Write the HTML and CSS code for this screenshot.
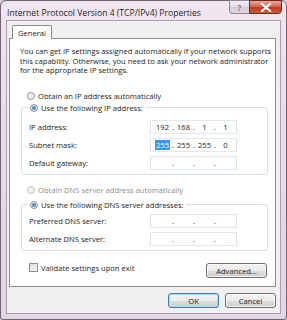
FILE: index.html
```html
<!DOCTYPE html>
<html>
<head>
  <meta charset="UTF-8">
  <title>Internet Protocol Version 4 (TCP/IPv4) Properties</title>
  <link rel="stylesheet" href="styles.css">
</head>
<body>
  <div class="window">
    <div class="titlebar">
      <span class="title">Internet Protocol Version 4 (TCP/IPv4) Properties</span>
      <div class="caption-buttons">
        <div class="cap help">?</div>
        <div class="cap close">
          <svg width="12" height="9" viewBox="0 0 12 9">
            <path d="M2 1 L10 8 M10 1 L2 8" stroke="#fff" stroke-width="2.2" stroke-linecap="square"/>
          </svg>
        </div>
      </div>
    </div>

    <div class="client">
      <div class="tabs">
        <div class="tab">General</div>
      </div>

      <div class="panel">
        <p class="intro">You can get IP settings assigned automatically if your network supports this capability. Otherwise, you need to ask your network administrator for the appropriate IP settings.</p>

        <div class="option"><span class="radio"></span>Obtain an IP address automatically</div>

        <fieldset class="group">
          <legend><span class="radio on"></span>Use the following IP address:</legend>
          <div class="row">
            <span class="label">IP address:</span>
            <div class="ip">
              <span>192</span><i>.</i><span>168</span><i>.</i><span>1</span><i>.</i><span>1</span>
            </div>
          </div>
          <div class="row">
            <span class="label">Subnet mask:</span>
            <div class="ip">
              <span><b class="sel">255</b></span><i>.</i><span>255</span><i>.</i><span>255</span><i>.</i><span>0</span>
            </div>
          </div>
          <div class="row">
            <span class="label">Default gateway:</span>
            <div class="ip">
              <span></span><i>.</i><span></span><i>.</i><span></span><i>.</i><span></span>
            </div>
          </div>
        </fieldset>

        <div class="option disabled"><span class="radio"></span>Obtain DNS server address automatically</div>

        <fieldset class="group dns">
          <legend><span class="radio on"></span>Use the following DNS server addresses:</legend>
          <div class="row">
            <span class="label">Preferred DNS server:</span>
            <div class="ip">
              <span></span><i>.</i><span></span><i>.</i><span></span><i>.</i><span></span>
            </div>
          </div>
          <div class="row">
            <span class="label">Alternate DNS server:</span>
            <div class="ip">
              <span></span><i>.</i><span></span><i>.</i><span></span><i>.</i><span></span>
            </div>
          </div>
        </fieldset>

        <div class="footer-row">
          <div class="check"><span class="box"></span>Validate settings upon exit</div>
          <div class="btn advanced">Advanced...</div>
        </div>
      </div>

      <div class="actions">
        <div class="btn default">OK</div>
        <div class="btn">Cancel</div>
      </div>
    </div>
  </div>
</body>
</html>
```

FILE: styles.css
```css
* {
  box-sizing: border-box;
}

body {
  margin: 0;
  width: 287px;
  height: 320px;
  overflow: hidden;
  background: #d8ccd8;
  font-family: 'Open Sans', 'Noto Sans', sans-serif;
  font-size: 7.6px;
  color: #1b1b1b;
}

.window {
  width: 287px;
  height: 320px;
  display: flex;
  flex-direction: column;
  border: 1px solid #6e6672;
  border-radius: 6px 6px 3px 3px;
  background: linear-gradient(180deg, #f1e6f0 0%, #e9dbe8 40%, #e4d5e3 100%);
  padding: 0 5px 5px 5px;
}

.titlebar {
  height: 19px;
  flex: 0 0 19px;
  display: flex;
  align-items: flex-start;
}

.title {
  margin: 6px 0 0 1px;
  font-size: 8.6px;
  color: #1e1e1e;
}

.caption-buttons {
  margin-left: auto;
  display: flex;
  margin-top: -1px;
  margin-right: -1px;
}

.cap {
  height: 14px;
  display: flex;
  align-items: center;
  justify-content: center;
}

.help {
  width: 20px;
  border: 1px solid #8f8794;
  border-right: none;
  border-radius: 0 0 0 4px;
  background: linear-gradient(180deg, #f3eef3 0%, #e3dbe3 50%, #d4cad4 51%, #dfd6df 100%);
  color: #7a7480;
  font-size: 8px;
  font-weight: bold;
}

.close {
  width: 33px;
  border: 1px solid #6e2a22;
  border-radius: 0 0 4px 0;
  background: linear-gradient(180deg, #e7a89a 0%, #d46a53 45%, #c23a20 55%, #cf5a3a 100%);
}

.client {
  flex: 1;
  display: flex;
  flex-direction: column;
  border: 1px solid #a99da9;
  background: #f0f0f0;
  padding: 4px 4px 5px 2px;
}

.tabs {
  display: flex;
  padding-left: 3px;
}

.tab {
  height: 14px;
  padding: 2px 5px 0 5px;
  border: 1px solid #898c95;
  border-bottom: none;
  border-radius: 2px 2px 0 0;
  background: #fff;
  margin-bottom: -1px;
  position: relative;
  z-index: 1;
}

.panel {
  flex: 1;
  border: 1px solid #898c95;
  background: #fff;
  padding: 8px 8px 0 10px;
  display: flex;
  flex-direction: column;
}

.intro {
  margin: 0 -8px 0 0;
  line-height: 9.5px;
}

.option {
  display: flex;
  align-items: center;
  height: 10px;
  margin: 15px 0 0 7px;
}

.option.disabled {
  color: #8d8d8d;
  margin-top: 10px;
}

.radio {
  width: 8px;
  height: 8px;
  border-radius: 50%;
  border: 1px solid #8e9094;
  background: radial-gradient(circle, #e4e4e4 0%, #f6f6f6 100%);
  margin-right: 3px;
  display: inline-block;
  flex: 0 0 8px;
  position: relative;
}

.radio.on::after {
  content: '';
  position: absolute;
  left: 1px;
  top: 1px;
  width: 4px;
  height: 4px;
  border-radius: 50%;
  background: radial-gradient(circle, #6fb6e6 0%, #1e5b92 100%);
}

.option.disabled .radio {
  border-color: #c2c2c2;
  background: #f2f2f2;
}

.group {
  margin: 2px 0 0 1px;
  border: 1px solid #d5dfe5;
  border-radius: 3px;
  padding: 0 30px 2px 7px;
}

.group legend {
  display: flex;
  align-items: center;
  height: 10px;
  padding: 0 2px 0 1px;
}

.group.dns {
  margin-top: 5px;
}

.row {
  display: flex;
  align-items: center;
  height: 18px;
}

.group .row:first-of-type {
  margin-top: 5px;
}

.dns .row:first-of-type {
  margin-top: 2px;
}

.label {
  flex: 0 0 121px;
}

.ip {
  width: 87px;
  height: 14px;
  border: 1px solid #abadb3;
  border-top-color: #e3e9ef;
  border-right-color: #dbdfe6;
  border-bottom-color: #e3e9ef;
  border-left-color: #e2e3ea;
  display: flex;
  align-items: center;
  padding: 0 2px 0 3px;
  background: #fff;
}

.ip span {
  width: 17px;
  text-align: center;
}

.ip i {
  font-style: normal;
  width: 4px;
  text-align: center;
}

.sel {
  font-weight: normal;
  background: #3399ff;
  color: #fff;
  padding: 0 1px;
}

.footer-row {
  display: flex;
  align-items: center;
  margin-top: 9px;
  height: 20px;
}

.check {
  display: flex;
  align-items: center;
  margin-left: 9px;
  margin-top: -4px;
}

.box {
  width: 9px;
  height: 9px;
  border: 1px solid #8e8f8f;
  background: linear-gradient(135deg, #dcdcdc 0%, #f7f7f7 100%);
  margin-right: 3px;
}

.btn {
  height: 15px;
  width: 51px;
  border: 1px solid #707070;
  border-radius: 3px;
  background: linear-gradient(180deg, #f2f2f2 0%, #ebebeb 50%, #dddddd 51%, #cfcfcf 100%);
  display: flex;
  align-items: center;
  justify-content: center;
  box-shadow: inset 0 0 0 1px rgba(255, 255, 255, 0.7);
}

.advanced {
  margin-left: auto;
  width: 61px;
  margin-top: 2px;
}

.actions {
  display: flex;
  justify-content: flex-end;
  gap: 6px;
  margin-top: 6px;
}

.btn.default {
  border-color: #3c7fb1;
  box-shadow: inset 0 0 0 1px #a6ddf7;
}
```
